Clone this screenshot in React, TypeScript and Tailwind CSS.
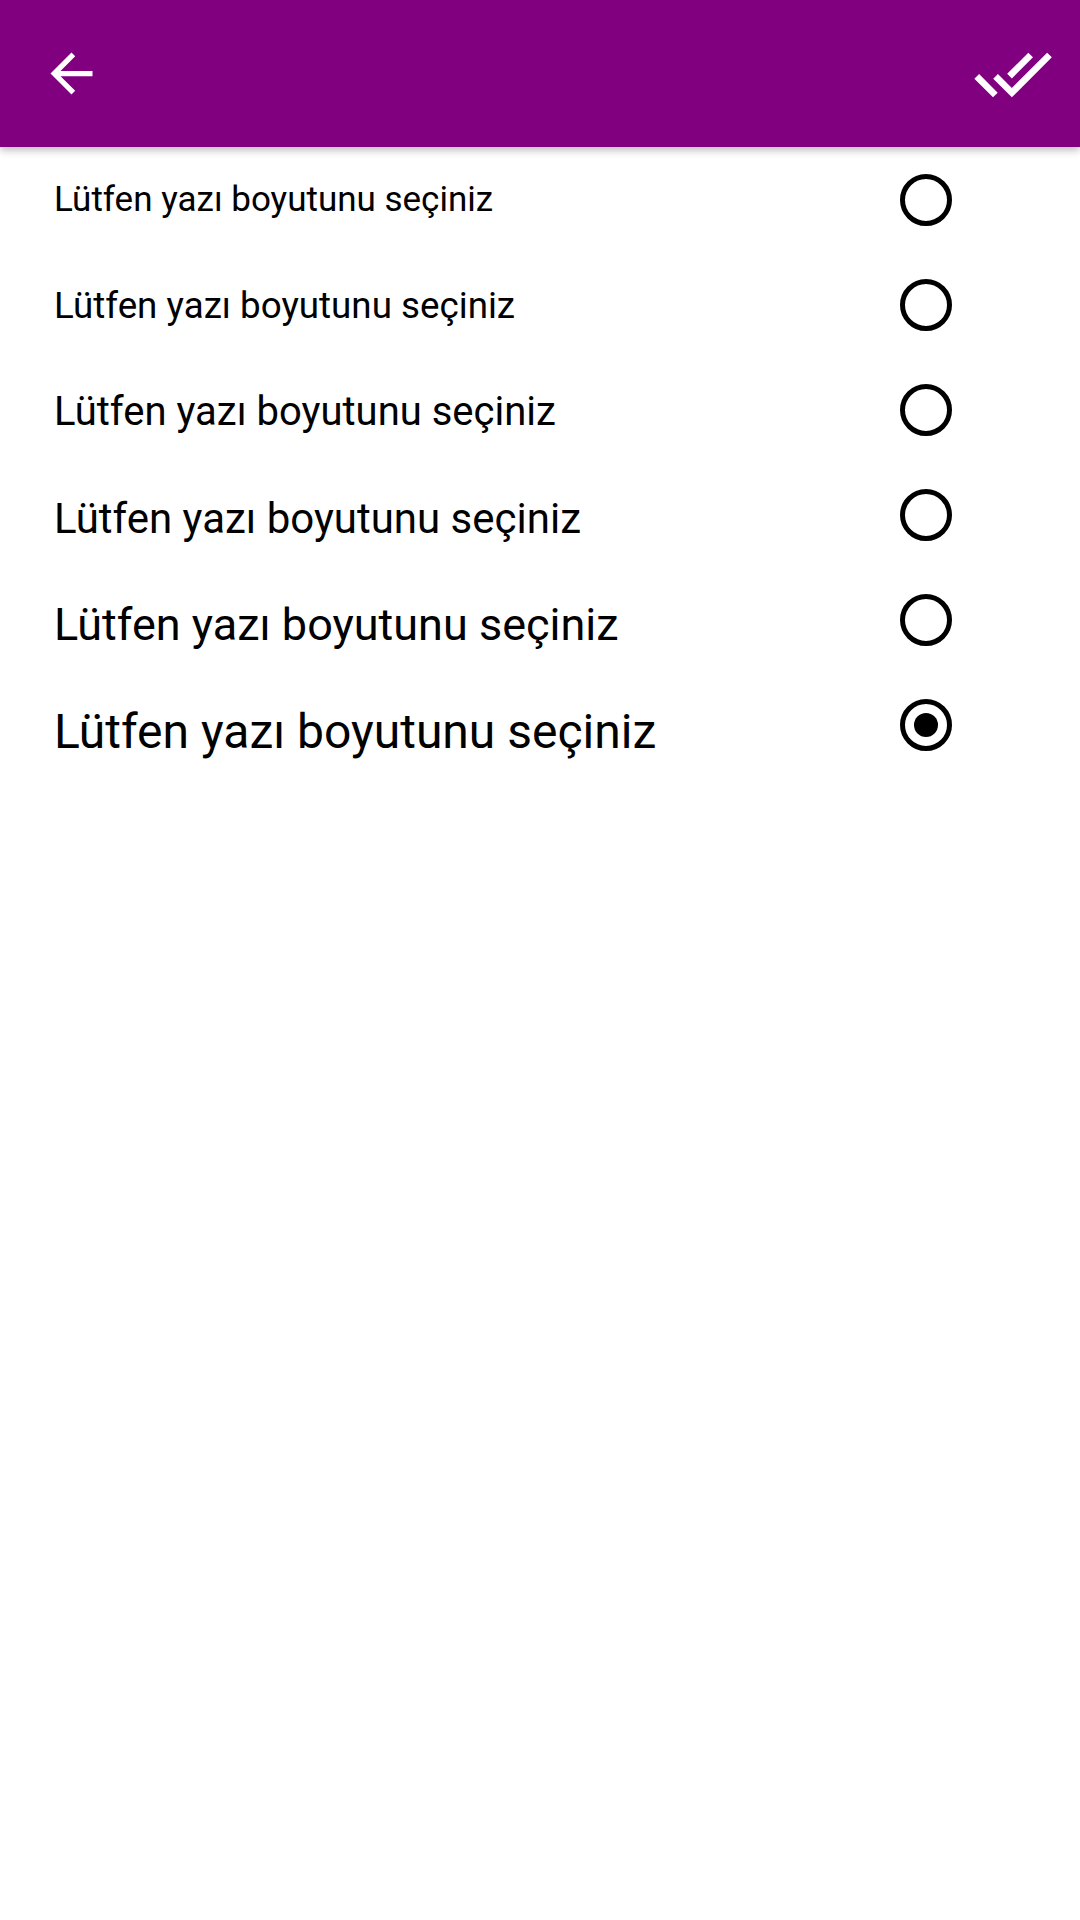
import React from "react";

const sizes = [
  "text-[35px]",
  "text-[36.75px]",
  "text-[40px]",
  "text-[42px]",
  "text-[45px]",
  "text-[48px]",
];

function Radio({ checked }: { checked: boolean }) {
  return (
    <div className="w-[52px] h-[52px] rounded-full border-[5px] border-black flex items-center justify-center shrink-0">
      {checked && <div className="w-[24px] h-[24px] rounded-full bg-black" />}
    </div>
  );
}

export default function App() {
  return (
    <div
      className="w-[1080px] h-[1920px] bg-white relative overflow-hidden"
      style={{ fontFamily: "Roboto, 'Noto Sans', sans-serif" }}
    >
      <div className="relative z-10 h-[147px] bg-[#800080] flex items-center justify-between shadow-[0_3px_8px_rgba(0,0,0,0.28)]">
        <div className="ml-[40px] w-[63px] h-[63px]">
          <svg viewBox="0 0 24 24" width="63" height="63" fill="white">
            <path d="M20 11H7.83l5.59-5.59L12 4l-8 8 8 8 1.41-1.41L7.83 13H20v-2z" />
          </svg>
        </div>
        <div className="mr-[27px] w-[80px] h-[80px]">
          <svg viewBox="0 0 24 24" width="80" height="80" fill="white">
            <path d="M18 7l-1.41-1.41-6.34 6.34 1.41 1.41L18 7zm4.24-1.41L11.66 16.17 7.48 12l-1.41 1.41L11.66 19l12-12-1.42-1.41zM.41 13.41L6 19l1.41-1.41L1.83 12 .41 13.41z" />
          </svg>
        </div>
      </div>
      <div className="flex flex-col">
        {sizes.map((s, i) => (
          <div key={i} className="h-[105px] flex items-center pl-[54px] pr-[128px]">
            <div className={`flex-1 self-start mt-[31.5px] text-black leading-[1.172] ${s}`}>
              Lütfen yazı boyutunu seçiniz
            </div>
            <Radio checked={i === 5} />
          </div>
        ))}
      </div>
    </div>
  );
}
